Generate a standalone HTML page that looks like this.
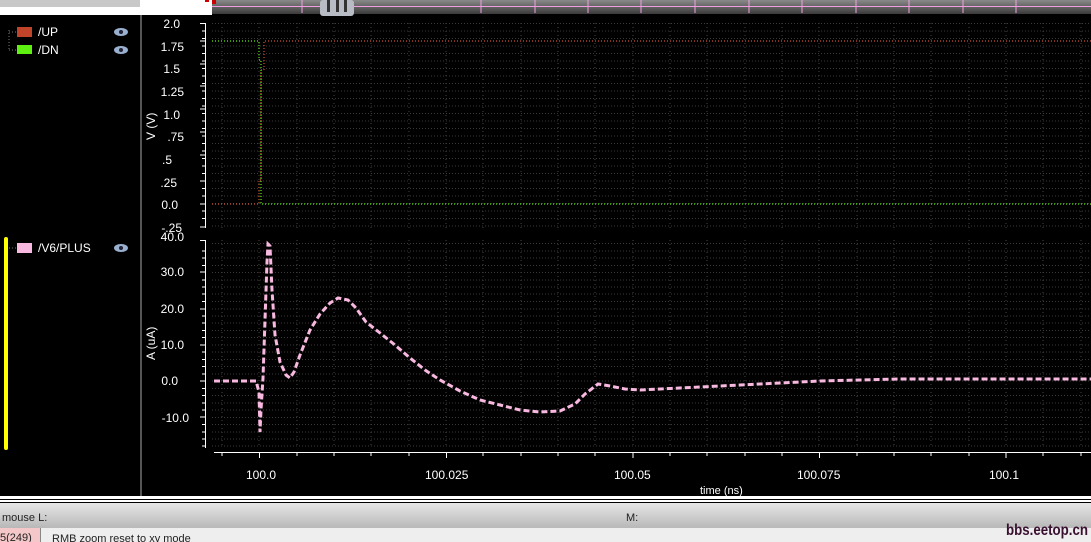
<!DOCTYPE html>
<html><head><meta charset="utf-8"><style>
html,body{margin:0;padding:0;background:#000;width:1091px;height:542px;overflow:hidden;font-family:"Liberation Sans",sans-serif}
svg{display:block}
</style></head><body>
<svg width="1091" height="542" viewBox="0 0 1091 542" xmlns="http://www.w3.org/2000/svg" font-family="Liberation Sans, sans-serif">
<defs>
<linearGradient id="tb" x1="0" y1="0" x2="0" y2="1"><stop offset="0" stop-color="#8a8a8a"/><stop offset="1" stop-color="#3a3a3a"/></linearGradient>
<linearGradient id="sb" x1="0" y1="0" x2="0" y2="1"><stop offset="0" stop-color="#e6e6e6"/><stop offset="1" stop-color="#b8b8b8"/></linearGradient>
</defs>
<rect width="1091" height="542" fill="#000"/>
<rect x="0" y="0" width="140" height="7" fill="#c8c8c8"/>
<rect x="0" y="7" width="140" height="8" fill="#fff"/>
<rect x="140" y="0" width="72" height="15" fill="#fff"/>
<rect x="140" y="15" width="2" height="482" fill="#555"/>
<rect x="212" y="0" width="879" height="14" fill="url(#tb)"/>
<line x1="212" y1="6.5" x2="1091" y2="6.5" stroke="#f0a0e0" stroke-width="1"/>
<g stroke="#f0a0e0" stroke-width="1">
<line x1="302" y1="0" x2="302" y2="13"/><line x1="481" y1="0" x2="481" y2="13"/><line x1="535" y1="0" x2="535" y2="13"/><line x1="588" y1="0" x2="588" y2="13"/><line x1="641" y1="0" x2="641" y2="13"/><line x1="695" y1="0" x2="695" y2="13"/><line x1="749" y1="0" x2="749" y2="13"/><line x1="802" y1="0" x2="802" y2="13"/><line x1="856" y1="0" x2="856" y2="13"/><line x1="909" y1="0" x2="909" y2="13"/><line x1="963" y1="0" x2="963" y2="13"/><line x1="1016" y1="0" x2="1016" y2="13"/>
</g>
<rect x="320" y="0" width="34" height="16" rx="3" fill="#b8bcc4"/>
<rect x="327" y="0" width="3" height="12" fill="#333"/><rect x="336" y="0" width="3" height="12" fill="#333"/><rect x="344" y="0" width="3" height="12" fill="#333"/>
<rect x="212" y="0" width="4" height="4" fill="#c00"/><rect x="205" y="0" width="4" height="2" fill="#c00"/>
<g fill="#fff" font-size="12">
<rect x="17" y="27" width="15" height="10" fill="#c0442a"/><text x="38" y="36">/UP</text>
<rect x="17" y="45" width="15" height="9" fill="#5ef010"/><text x="38" y="54">/DN</text>
<rect x="17" y="243" width="15" height="10" fill="#f8b8e0"/><text x="38" y="252">/V6/PLUS</text>
</g>
<g stroke="#777" stroke-dasharray="1 2">
<line x1="9" y1="30" x2="9" y2="50"/><line x1="9" y1="32" x2="16" y2="32"/><line x1="9" y1="50" x2="16" y2="50"/><line x1="9" y1="248" x2="16" y2="248"/>
</g>
<g fill="#9ab0d0"><ellipse cx="121" cy="32" rx="7" ry="4"/><ellipse cx="121" cy="50" rx="7" ry="4"/><ellipse cx="121" cy="248" rx="7" ry="4"/></g>
<g fill="#223"><circle cx="121" cy="32" r="2"/><circle cx="121" cy="50" r="2"/><circle cx="121" cy="248" r="2"/></g>
<rect x="4" y="237" width="4" height="213" rx="2" fill="#ff0"/>
<g stroke="#444" stroke-width="1" stroke-dasharray="1 3">
<line x1="222" y1="23" x2="222" y2="228"/><line x1="259" y1="23" x2="259" y2="228"/><line x1="297" y1="23" x2="297" y2="228"/><line x1="334" y1="23" x2="334" y2="228"/><line x1="371" y1="23" x2="371" y2="228"/><line x1="409" y1="23" x2="409" y2="228"/><line x1="446" y1="23" x2="446" y2="228"/><line x1="483" y1="23" x2="483" y2="228"/><line x1="521" y1="23" x2="521" y2="228"/><line x1="558" y1="23" x2="558" y2="228"/><line x1="595" y1="23" x2="595" y2="228"/><line x1="633" y1="23" x2="633" y2="228"/><line x1="670" y1="23" x2="670" y2="228"/><line x1="707" y1="23" x2="707" y2="228"/><line x1="745" y1="23" x2="745" y2="228"/><line x1="782" y1="23" x2="782" y2="228"/><line x1="819" y1="23" x2="819" y2="228"/><line x1="857" y1="23" x2="857" y2="228"/><line x1="894" y1="23" x2="894" y2="228"/><line x1="931" y1="23" x2="931" y2="228"/><line x1="969" y1="23" x2="969" y2="228"/><line x1="1006" y1="23" x2="1006" y2="228"/><line x1="1043" y1="23" x2="1043" y2="228"/><line x1="1081" y1="23" x2="1081" y2="228"/>
<line x1="222" y1="240" x2="222" y2="448"/><line x1="259" y1="240" x2="259" y2="448"/><line x1="297" y1="240" x2="297" y2="448"/><line x1="334" y1="240" x2="334" y2="448"/><line x1="371" y1="240" x2="371" y2="448"/><line x1="409" y1="240" x2="409" y2="448"/><line x1="446" y1="240" x2="446" y2="448"/><line x1="483" y1="240" x2="483" y2="448"/><line x1="521" y1="240" x2="521" y2="448"/><line x1="558" y1="240" x2="558" y2="448"/><line x1="595" y1="240" x2="595" y2="448"/><line x1="633" y1="240" x2="633" y2="448"/><line x1="670" y1="240" x2="670" y2="448"/><line x1="707" y1="240" x2="707" y2="448"/><line x1="745" y1="240" x2="745" y2="448"/><line x1="782" y1="240" x2="782" y2="448"/><line x1="819" y1="240" x2="819" y2="448"/><line x1="857" y1="240" x2="857" y2="448"/><line x1="894" y1="240" x2="894" y2="448"/><line x1="931" y1="240" x2="931" y2="448"/><line x1="969" y1="240" x2="969" y2="448"/><line x1="1006" y1="240" x2="1006" y2="448"/><line x1="1043" y1="240" x2="1043" y2="448"/><line x1="1081" y1="240" x2="1081" y2="448"/>
</g>
<g stroke="#3a3a3a" stroke-width="1" stroke-dasharray="1 2">
<path d="M212 23.5H1091M212 31H1091M212 38.5H1091M212 46H1091M212 53.5H1091M212 61H1091M212 68.5H1091M212 76H1091M212 83.5H1091M212 91H1091M212 98.5H1091M212 106H1091M212 113.5H1091M212 121H1091M212 128.5H1091M212 136H1091M212 143.5H1091M212 151H1091M212 158.5H1091M212 166H1091M212 173.5H1091M212 181H1091M212 188.5H1091M212 196H1091M212 203.5H1091M212 211H1091M212 218.5H1091M212 226H1091"/>
<path d="M212 243.5H1091M212 251H1091M212 258H1091M212 265.5H1091M212 272.5H1091M212 280H1091M212 287H1091M212 294H1091M212 301.5H1091M212 309H1091M212 316H1091M212 323H1091M212 330.5H1091M212 337.5H1091M212 345H1091M212 352H1091M212 359.5H1091M212 366.5H1091M212 374H1091M212 381H1091M212 388.5H1091M212 395.5H1091M212 403H1091M212 410H1091M212 417.5H1091M212 424.5H1091M212 432H1091M212 439H1091M212 446H1091"/>
</g>
<g stroke="#fff" stroke-width="1">
<line x1="205.5" y1="23" x2="205.5" y2="228"/><line x1="205.5" y1="240" x2="205.5" y2="448"/>
<path d="M200 23.5h6M202 31h4M202 38.5h4M202 46h4M200 41h6M202 53.5h4M202 61h4M200 64h6M202 68.5h4M202 76h4M200 86h6M202 83.5h4M202 91h4M202 98.5h4M202 106h4M200 109h6M202 113.5h4M202 121h4M202 128.5h4M200 132h6M202 136h4M202 143.5h4M202 151h4M200 155h6M202 158.5h4M202 166h4M202 173.5h4M200 181h6M202 188.5h4M202 196h4M200 204h6M202 211h4M202 218.5h4M200 227h6"/>
<path d="M200 240.5h6M202 251h4M202 258h4M202 265.5h4M200 272h6M202 280h4M202 287h4M202 294h4M202 301.5h4M200 309h6M202 316h4M202 323h4M202 330.5h4M202 337.5h4M200 345h6M202 352h4M202 359.5h4M202 366.5h4M202 374h4M200 381h6M202 388.5h4M202 395.5h4M202 403h4M202 410h4M200 417h6M202 424.5h4M202 432h4M202 439h4M202 446h4"/>
<line x1="214" y1="452.5" x2="1091" y2="452.5"/>
<path d="M222 452v4M259.5 452v6M297 452v4M334 452v4M371 452v4M409 452v4M446.5 452v6M483 452v4M521 452v4M558 452v4M595 452v4M633 452v6M670 452v4M707 452v4M745 452v4M782 452v4M819.5 452v6M857 452v4M894 452v4M931 452v4M969 452v4M1006 452v6M1043 452v4M1081 452v4"/>
</g>
<g fill="#fff" font-size="12" text-anchor="end">
<text x="180" y="28">2.0</text><text x="184" y="51">1.75</text><text x="180" y="73">1.5</text><text x="184" y="96">1.25</text><text x="180" y="119">1.0</text><text x="184" y="141">.75</text><text x="172" y="164">.5</text><text x="177" y="187">.25</text><text x="178" y="209">0.0</text><text x="182" y="232">-.25</text>
<text x="184" y="241">40.0</text><text x="184" y="276">30.0</text><text x="184" y="313">20.0</text><text x="184" y="349">10.0</text><text x="178" y="385">0.0</text><text x="189" y="422">-10.0</text>
</g>
<g fill="#fff" font-size="12">
<text transform="translate(155,140) rotate(-90)">V (V)</text>
<text transform="translate(155,360) rotate(-90)">A (uA)</text>
<text x="246" y="479">100.0</text><text x="425" y="479">100.025</text><text x="614" y="479">100.05</text><text x="797" y="479">100.075</text><text x="989" y="479">100.1</text>
<text x="700" y="494" font-size="11">time (ns)</text>
</g>
<g fill="none" stroke-width="1.2" stroke-dasharray="1 2">
<path d="M212 41H259V60H261V204H266V204H1091" stroke="#5ef010"/>
<path d="M212 204H259V180H261V70H264V41H1091" stroke="#d0502f"/>
</g>
<path d="M214 381L256 381L259 392L260 432L261 410L263 378L265 320L267 262L268 244L270 246L272 290L275 335L280 362L286 375L290 378L294 372L300 355L310 330L320 314L330 303L338 298L348 300L356 308L366 322L380 333L395 345L410 358L425 370L440 380L460 391L480 400L500 405L520 410L540 412L560 411L575 404L585 394L598 384L610 386L625 389L640 390L660 389L700 387L740 385L780 383L820 381L860 380L900 379L1091 379" fill="none" stroke="#f8b8e0" stroke-width="3" stroke-dasharray="6 3"/>
<rect x="0" y="496" width="1091" height="3" fill="#fff"/>
<rect x="0" y="499" width="1091" height="1" fill="#000"/>
<rect x="0" y="500" width="1091" height="2" fill="#fff"/>
<rect x="0" y="502" width="1091" height="1" fill="#000"/>
<rect x="0" y="503" width="1091" height="25" fill="url(#sb)"/>
<rect x="0" y="528" width="1091" height="14" fill="#eee"/>
<rect x="0" y="528" width="40" height="14" fill="#f4c8c8"/>
<line x1="40.5" y1="528" x2="40.5" y2="542" stroke="#888"/>
<g font-size="11" fill="#222">
<text x="2" y="521">mouse L:</text><text x="626" y="521">M:</text>
<text x="0" y="541">5(249)</text><text x="52" y="542">RMB zoom reset to xy mode</text>
</g>
<text x="1006" y="535" font-size="16" font-weight="bold" fill="#3a1030" textLength="82" lengthAdjust="spacingAndGlyphs">bbs.eetop.cn</text>
</svg>
</body></html>
